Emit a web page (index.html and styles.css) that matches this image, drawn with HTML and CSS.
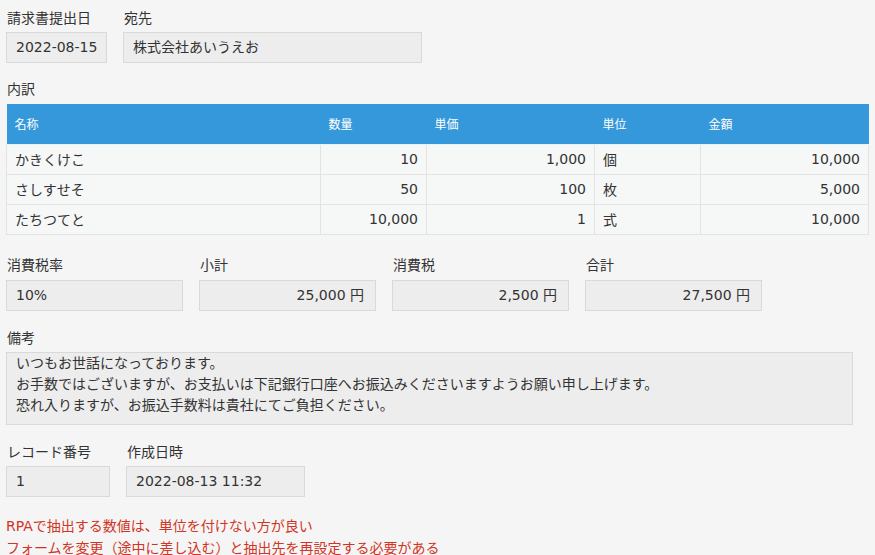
FILE: index.html
```html
<!DOCTYPE html>
<html lang="ja">

<head>
    <title>請求書</title>
    <meta charset="UTF-8">
    <link rel="stylesheet" href="styles.css">
</head>

<body>
    <div class="record">

        <div class="row row-top">
            <div class="field">
                <div class="label">請求書提出日</div>
                <div class="value w-date">2022-08-15</div>
            </div>
            <div class="field">
                <div class="label">宛先</div>
                <div class="value w-dest">株式会社あいうえお</div>
            </div>
        </div>

        <div class="field field-table">
            <div class="label">内訳</div>
            <table class="subtable">
                <thead>
                    <tr>
                        <th class="c-name">名称</th>
                        <th class="c-qty">数量</th>
                        <th class="c-price">単価</th>
                        <th class="c-unit">単位</th>
                        <th class="c-amount">金額</th>
                    </tr>
                </thead>
                <tbody>
                    <tr>
                        <td>かきくけこ</td>
                        <td class="num">10</td>
                        <td class="num">1,000</td>
                        <td>個</td>
                        <td class="num">10,000</td>
                    </tr>
                    <tr>
                        <td>さしすせそ</td>
                        <td class="num">50</td>
                        <td class="num">100</td>
                        <td>枚</td>
                        <td class="num">5,000</td>
                    </tr>
                    <tr>
                        <td>たちつてと</td>
                        <td class="num">10,000</td>
                        <td class="num">1</td>
                        <td>式</td>
                        <td class="num">10,000</td>
                    </tr>
                </tbody>
            </table>
        </div>

        <div class="row row-calc">
            <div class="field">
                <div class="label">消費税率</div>
                <div class="value w-calc">10%</div>
            </div>
            <div class="field">
                <div class="label">小計</div>
                <div class="value w-calc num">25,000 円</div>
            </div>
            <div class="field">
                <div class="label">消費税</div>
                <div class="value w-calc num">2,500 円</div>
            </div>
            <div class="field">
                <div class="label">合計</div>
                <div class="value w-calc num">27,500 円</div>
            </div>
        </div>

        <div class="field field-note">
            <div class="label">備考</div>
            <div class="value note">いつもお世話になっております。<br>お手数ではございますが、お支払いは下記銀行口座へお振込みくださいますようお願い申し上げます。<br>恐れ入りますが、お振込手数料は貴社にてご負担ください。</div>
        </div>

        <div class="row row-meta">
            <div class="field">
                <div class="label">レコード番号</div>
                <div class="value w-id">1</div>
            </div>
            <div class="field">
                <div class="label">作成日時</div>
                <div class="value w-created">2022-08-13 11:32</div>
            </div>
        </div>

        <div class="memo">
            <p>RPAで抽出する数値は、単位を付けない方が良い</p>
            <p>フォームを変更（途中に差し込む）と抽出先を再設定する必要がある</p>
        </div>

    </div>
</body>

</html>
```

FILE: styles.css
```css
body {
    background: #f5f5f5;
    color: #333333;
    font-family: "DejaVu Sans", "Noto Sans CJK JP", sans-serif;
    font-size: 14px;
    margin: 0;
}

.record {
    padding: 8px 6px 0 6px;
}

.row {
    display: flex;
    gap: 16px;
}

.label {
    line-height: 20px;
    padding-left: 1px;
    margin-bottom: 4px;
    white-space: nowrap;
}

.value {
    box-sizing: border-box;
    height: 31px;
    line-height: 29px;
    padding: 0 9px;
    background-color: #ededed;
    border: 1px solid #d9d9d9;
    white-space: nowrap;
}

.num {
    text-align: right;
}

.w-date {
    width: 101px;
}

.w-dest {
    width: 299px;
}

.field-table {
    margin-top: 16px;
}

.field-table .label {
    margin-bottom: 5px;
}

.subtable {
    width: 863px;
    border-collapse: collapse;
    table-layout: fixed;
}

.subtable th {
    box-sizing: border-box;
    background-color: #3498db;
    color: #fff;
    font-weight: normal;
    font-size: 12px;
    text-align: left;
    height: 40px;
    padding: 0 8px;
    border-bottom: 1px solid #e4f4fb;
}

.c-name {
    width: 314px;
}

.c-qty {
    width: 106px;
}

.c-price {
    width: 168px;
}

.c-unit {
    width: 106px;
}

.subtable td {
    height: 29px;
    padding: 0 8px;
    background-color: #f6f7f7;
    border: 1px solid #e3e3e3;
}

.row-calc {
    margin-top: 20px;
}

.row-calc .label {
    margin-bottom: 5px;
}

.w-calc {
    width: 177px;
}

.w-calc.num {
    padding-right: 11px;
}

.field-note {
    margin-top: 17px;
}

.note {
    width: 847px;
    height: 73px;
    line-height: 21px;
    padding-top: 0;
    white-space: normal;
}

.row-meta {
    margin-top: 17px;
}

.w-id {
    width: 104px;
}

.w-created {
    width: 179px;
}

.memo {
    margin-top: 18px;
    color: #d03526;
}

.memo p {
    margin: 0;
    line-height: 22px;
}
```
